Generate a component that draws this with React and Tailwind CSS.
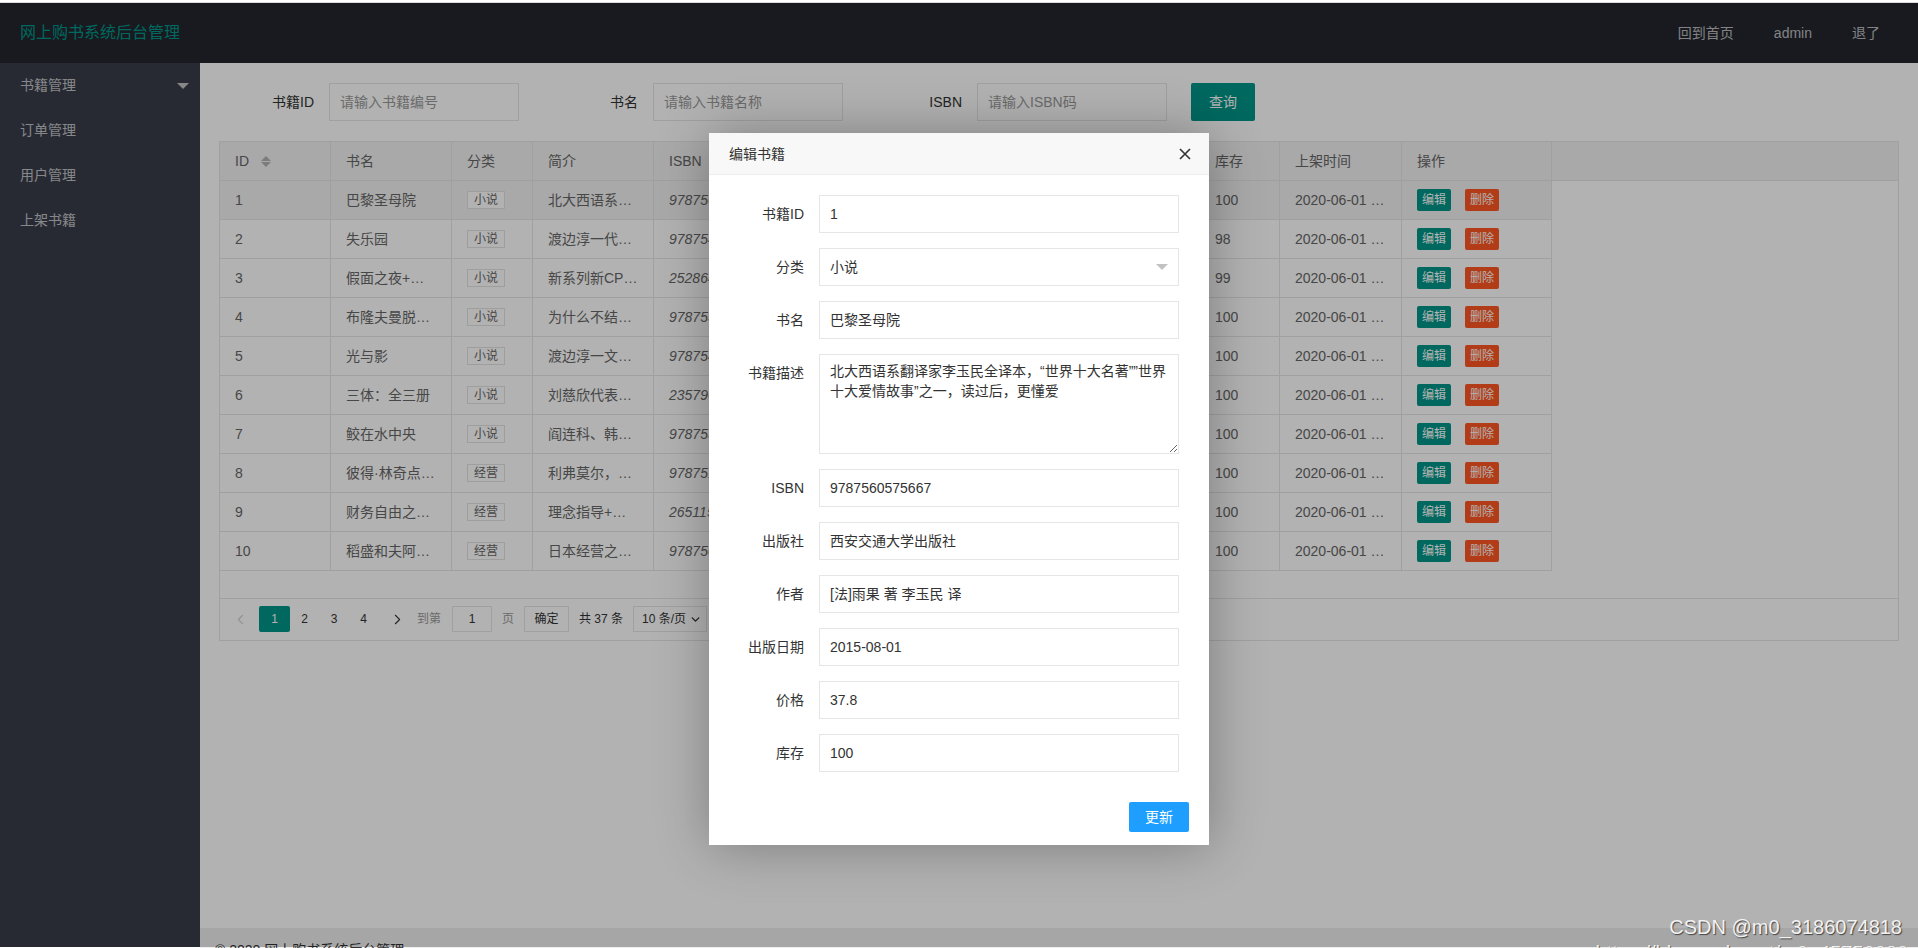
import React from "react";
import { ChevronLeft, ChevronRight, ChevronDown } from "lucide-react";

const books = [
    { id: 1, name: "巴黎圣母院", cat: "小说", intro: "北大西语系…", isbn: "9787560575667", pub: "西安交通大学…", author: "[法]雨果 著…", date: "2015-08-01", price: "37.8", stock: 100 },
    { id: 2, name: "失乐园", cat: "小说", intro: "渡边淳一代…", isbn: "9787540485528", pub: "北京联合出…", author: "渡边淳一", date: "2017-01-01", price: "45.0", stock: 98 },
    { id: 3, name: "假面之夜+…", cat: "小说", intro: "新系列新CP…", isbn: "25286415", pub: "南海出版公司", author: "东野圭吾", date: "2020-03-01", price: "59.0", stock: 99 },
    { id: 4, name: "布隆夫曼脱…", cat: "小说", intro: "为什么不结…", isbn: "9787559640284", pub: "北京联合出…", author: "菲利普·罗斯", date: "2020-05-01", price: "52.0", stock: 100 },
    { id: 5, name: "光与影", cat: "小说", intro: "渡边淳一文…", isbn: "9787540485771", pub: "青岛出版社", author: "渡边淳一", date: "2017-06-01", price: "39.8", stock: 100 },
    { id: 6, name: "三体：全三册", cat: "小说", intro: "刘慈欣代表…", isbn: "23579654", pub: "重庆出版社", author: "刘慈欣", date: "2016-10-01", price: "93.0", stock: 100 },
    { id: 7, name: "鲛在水中央", cat: "小说", intro: "阎连科、韩…", isbn: "9787559643650", pub: "北京联合出…", author: "王小鸥", date: "2020-04-01", price: "42.0", stock: 100 },
    { id: 8, name: "彼得·林奇点…", cat: "经营", intro: "利弗莫尔，…", isbn: "9787515360", pub: "中国青年出…", author: "彼得·林奇", date: "2018-05-01", price: "68.0", stock: 100 },
    { id: 9, name: "财务自由之…", cat: "经营", intro: "理念指导+…", isbn: "26511542", pub: "中国经济出…", author: "格兰特", date: "2019-08-01", price: "49.8", stock: 100 },
    { id: 10, name: "稻盛和夫阿…", cat: "经营", intro: "日本经营之…", isbn: "9787508650", pub: "中信出版社", author: "稻盛和夫", date: "2019-01-01", price: "58.0", stock: 100 },
];

// column widths include the right border
const cols = [
    { key: "id", title: "ID", w: "w-[111px]" },
    { key: "name", title: "书名", w: "w-[121px]" },
    { key: "cat", title: "分类", w: "w-[81px]" },
    { key: "intro", title: "简介", w: "w-[121px]" },
    { key: "isbn", title: "ISBN", w: "w-[121px]" },
    { key: "pub", title: "出版社", w: "w-[121px]" },
    { key: "author", title: "作者", w: "w-[121px]" },
    { key: "date", title: "出版日期", w: "w-[102px]" },
    { key: "price", title: "价格", w: "w-[81px]" },
    { key: "stock", title: "库存", w: "w-[80px]" },
    { key: "time", title: "上架时间", w: "w-[122px]" },
    { key: "op", title: "操作", w: "w-[150px]" },
];

const fields = [
    { label: "书籍ID", value: "1" },
    { label: "分类", value: "小说", select: true },
    { label: "书名", value: "巴黎圣母院" },
    { label: "书籍描述", textarea: true },
    { label: "ISBN", value: "9787560575667" },
    { label: "出版社", value: "西安交通大学出版社" },
    { label: "作者", value: "[法]雨果 著 李玉民 译" },
    { label: "出版日期", value: "2015-08-01" },
    { label: "价格", value: "37.8" },
    { label: "库存", value: "100" },
];

const SortIcon = () => (
    <span className="ml-[12px] flex flex-col gap-[1px]">
        <span className="block w-0 h-0 border-x-[5px] border-x-transparent border-b-[5px] border-b-[#b2b2b2]" />
        <span className="block w-0 h-0 border-x-[5px] border-x-transparent border-t-[5px] border-t-[#b2b2b2]" />
    </span>
);

const Cell = ({ col, book }) => {
    if (col.key === "cat") {
        return (
            <span className="inline-block h-[18px] px-[6px] border border-[#e2e2e2] bg-white text-[12px] leading-[16px] text-[#666]">
                {book.cat}
            </span>
        );
    }
    if (col.key === "isbn") return <span className="italic">{book.isbn}</span>;
    if (col.key === "time") return <span>2020-06-01 …</span>;
    if (col.key === "op") {
        return (
            <div className="flex gap-[14px]">
                <span className="h-[22px] px-[5px] rounded-[2px] bg-[#009688] text-white text-[12px] leading-[22px]">编辑</span>
                <span className="h-[22px] px-[5px] rounded-[2px] bg-[#FF5722] text-white text-[12px] leading-[22px]">删除</span>
            </div>
        );
    }
    return <span className="whitespace-nowrap overflow-hidden">{book[col.key]}</span>;
};

const SearchItem = ({ label, placeholder }) => (
    <div className="flex items-center mr-[24px]">
        <label className="w-[110px] pr-[15px] text-right text-[14px] leading-[20px] text-[#333]">{label}</label>
        <input
            className="w-[190px] h-[38px] border border-[#e6e6e6] bg-white pl-[10px] text-[14px] outline-none placeholder:text-[#999]"
            placeholder={placeholder}
        />
    </div>
);

export default function App() {
    return (
        <div className="relative w-[1918px] h-[948px] overflow-hidden bg-white font-['Liberation_Sans','Noto_Sans_CJK_SC',sans-serif]">
            <div className="h-[3px] bg-white border-b border-[#dcdcdc]" />

            <div className="relative h-[944px]">
                {/* top bar */}
                <header className="h-[60px] bg-[#23262E] flex items-center">
                    <div className="w-[200px] text-center text-[16px] leading-[60px] text-[#009688]">网上购书系统后台管理</div>
                    <nav className="ml-auto flex pr-[18px] text-[14px] text-white/70">
                        <a className="px-[20px] leading-[60px]">回到首页</a>
                        <a className="px-[20px] leading-[60px]">admin</a>
                        <a className="px-[20px] leading-[60px]">退了</a>
                    </nav>
                </header>

                <div className="flex h-[884px]">
                    {/* side menu */}
                    <aside className="w-[200px] shrink-0 bg-[#393D49] text-[14px] text-white/70">
                        <div className="relative h-[45px] pl-[20px] leading-[45px]">
                            书籍管理
                            <span className="absolute right-[11px] top-[20px] w-0 h-0 border-x-[6px] border-x-transparent border-t-[6px] border-t-[#c2c2c2]" />
                        </div>
                        <div className="h-[45px] pl-[20px] leading-[45px]">订单管理</div>
                        <div className="h-[45px] pl-[20px] leading-[45px]">用户管理</div>
                        <div className="h-[45px] pl-[20px] leading-[45px]">上架书籍</div>
                    </aside>

                    <main className="flex-1 flex flex-col">
                        <div className="h-[865px] shrink-0 px-[19px] pt-[20px]">
                            {/* search */}
                            <div className="flex items-center h-[38px]">
                                <SearchItem label="书籍ID" placeholder="请输入书籍编号" />
                                <SearchItem label="书名" placeholder="请输入书籍名称" />
                                <SearchItem label="ISBN" placeholder="请输入ISBN码" />
                                <button className="h-[38px] w-[64px] bg-[#009688] text-white text-[14px] rounded-[2px]">查询</button>
                            </div>

                            {/* table */}
                            <div className="mt-[20px] border border-[#e6e6e6] text-[14px] text-[#666]">
                                <div className="flex h-[39px] bg-[#f2f2f2] border-b border-[#e6e6e6]">
                                    {cols.map((c) => (
                                        <div key={c.key} className={`${c.w} shrink-0 flex items-center px-[15px] border-r border-[#e6e6e6]`}>
                                            {c.title}
                                            {c.key === "id" && <SortIcon />}
                                        </div>
                                    ))}
                                </div>
                                {books.map((b, i) => (
                                    <div key={b.id} className={`flex h-[39px] w-[1332px] border-b border-[#e6e6e6] ${i === 0 ? "bg-[#f2f2f2]" : "bg-white"}`}>
                                        {cols.map((c) => (
                                            <div key={c.key} className={`${c.w} shrink-0 flex items-center px-[15px] overflow-hidden border-r border-[#e6e6e6]`}>
                                                <Cell col={c} book={b} />
                                            </div>
                                        ))}
                                    </div>
                                ))}
                                <div className="h-[27px]" />

                                {/* pager */}
                                <div className="h-[42px] border-t border-[#e6e6e6] pl-[7px] pt-[7px] flex items-start text-[12px] text-[#333]">
                                    <span className="w-[27px] h-[26px] flex items-center justify-center text-[#d2d2d2]">
                                        <ChevronLeft size={17} strokeWidth={1.5} />
                                    </span>
                                    <span className="ml-[5px] w-[31px] h-[26px] leading-[26px] text-center bg-[#009688] text-white rounded-[2px]">1</span>
                                    <span className="w-[29px] h-[26px] leading-[26px] text-center">2</span>
                                    <span className="w-[30px] h-[26px] leading-[26px] text-center">3</span>
                                    <span className="w-[29px] h-[26px] leading-[26px] text-center">4</span>
                                    <span className="ml-[5px] w-[28px] h-[26px] flex items-center justify-center">
                                        <ChevronRight size={17} strokeWidth={1.5} />
                                    </span>
                                    <span className="ml-[6px] h-[26px] leading-[26px] text-[#999]">到第</span>
                                    <span className="ml-[11px] w-[40px] h-[26px] leading-[24px] text-center border border-[#e6e6e6] bg-white">1</span>
                                    <span className="ml-[10px] h-[26px] leading-[26px] text-[#999]">页</span>
                                    <span className="ml-[10px] w-[45px] h-[26px] leading-[24px] text-center border border-[#e6e6e6] bg-white">确定</span>
                                    <span className="ml-[10px] h-[26px] leading-[26px]">共 37 条</span>
                                    <span className="ml-[10px] w-[74px] h-[26px] pl-[8px] pr-[4px] flex items-center justify-between border border-[#e6e6e6] bg-white">
                                        10 条/页
                                        <ChevronDown size={13} strokeWidth={2.5} />
                                    </span>
                                </div>
                            </div>
                        </div>

                        <footer className="h-[44px] shrink-0 bg-[#eeeeee] pl-[15px] text-[14px] leading-[44px] text-[#333]">
                            © 2020 网上购书系统后台管理
                        </footer>
                    </main>
                </div>

                {/* layer shade */}
                <div className="absolute inset-0 bg-black/30" />
            </div>

            {/* edit dialog */}
            <div className="absolute left-[709px] top-[133px] w-[500px] h-[712px] flex flex-col bg-white shadow-[1px_1px_50px_rgba(0,0,0,0.3)] text-[#333]">
                <div className="relative h-[42px] shrink-0 bg-[#F8F8F8] border-b border-[#eeeeee] pl-[20px] text-[14px] leading-[42px]">
                    编辑书籍
                    <svg className="absolute right-[18px] top-[15px]" width="12" height="12" viewBox="0 0 12 12">
                        <path d="M1 1L11 11M11 1L1 11" stroke="#333" strokeWidth="1.6" fill="none" />
                    </svg>
                </div>
                <div className="pt-[20px] pr-[30px]">
                    {fields.map((f) => (
                        <div key={f.label} className="flex mb-[15px]">
                            <label className="w-[110px] shrink-0 pr-[15px] py-[9px] text-right text-[14px] leading-[20px]">{f.label}</label>
                            {f.textarea ? (
                                <textarea
                                    readOnly
                                    className="flex-1 h-[100px] border border-[#e6e6e6] px-[10px] py-[6px] text-[14px] leading-[20px] whitespace-pre overflow-hidden outline-none"
                                    value={"北大西语系翻译家李玉民全译本，“世界十大名著””世界\n十大爱情故事”之一，读过后，更懂爱"}
                                />
                            ) : (
                                <div className="relative flex-1 h-[38px] border border-[#e6e6e6] pl-[10px] text-[14px] leading-[36px]">
                                    {f.value}
                                    {f.select && (
                                        <span className="absolute right-[10px] top-[15px] w-0 h-0 border-x-[6px] border-x-transparent border-t-[6px] border-t-[#c2c2c2]" />
                                    )}
                                </div>
                            )}
                        </div>
                    ))}
                </div>
                <div className="flex justify-end pr-[20px] pt-[15px]">
                    <button className="w-[60px] h-[30px] bg-[#1E9FFF] text-white text-[14px] rounded-[2px]">更新</button>
                </div>
            </div>

            {/* watermark */}
            <div className="absolute right-[16px] top-[915px] text-[20px] leading-[24px] text-[#f2f2f2] [text-shadow:1px_1px_1px_rgba(0,0,0,0.6)]">
                CSDN @m0_3186074818
            </div>
            <div className="absolute right-[10px] top-[941px] text-[20px] leading-[24px] text-[#f2f2f2] [text-shadow:1px_1px_1px_rgba(0,0,0,0.6)]">
                https://blog.csdn.net/m0_45750080
            </div>
        </div>
    );
}
